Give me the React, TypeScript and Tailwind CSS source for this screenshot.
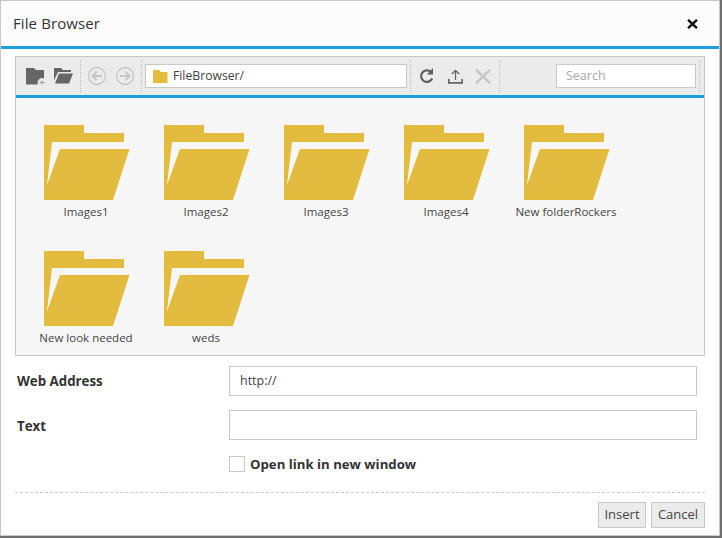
const folders = ["Images1", "Images2", "Images3", "Images4", "New folderRockers", "New look needed", "weds"];

function BigFolder() {
  return (
    <svg width="86" height="75" viewBox="0 0 86 75" className="block">
      <path d="M0 0H40V8H80V17H8L3 60L16 24H85.500L69 75H0Z" fill="#e3bc3f" />
    </svg>
  );
}

function Separator() {
  return <div className="h-[33px] w-0 border-l border-dotted border-[#bdbdbd]" />;
}

function CircleArrow({ dir }: { dir: "left" | "right" }) {
  return (
    <svg width="20" height="20" viewBox="0 0 20 20" fill="none" stroke="#c6c6c6" className="block">
      <circle cx="10" cy="10" r="8.500" strokeWidth="1.300" />
      {dir === "left" ? (
        <path d="M15 10H6M9.500 6L5.500 10L9.500 14" strokeWidth="2" />
      ) : (
        <path d="M5 10H14M10.500 6L14.500 10L10.500 14" strokeWidth="2" />
      )}
    </svg>
  );
}

export default function App() {
  return (
    <div className="h-[538px] w-[722px] overflow-hidden bg-[#6f6f6f] font-['Open_Sans','Noto_Sans',sans-serif] text-[#333]">
      <div className="h-[536px] w-[720px] border border-[#c8c8c8] bg-white">
        <div className="flex h-[45px] items-center justify-between bg-[#fcfcfc] pr-[21px] pl-[12px]">
          <span className="text-[15px] tracking-[0.1px] text-[#333]">File Browser</span>
          <svg width="11" height="10" viewBox="0 0 11 10" stroke="#111" strokeWidth="2.400" className="block">
            <path d="M1 .8L10 9.200M10 .8L1 9.200" />
          </svg>
        </div>
        <div className="h-[3px] bg-[#1b9fdc]" />

        <div className="mx-[14px] mt-[7px] h-[300px] border border-[#c8c8c8] bg-[#f7f7f7]">
          <div className="flex h-[38px] items-center bg-[#ebebeb] pl-[10px]">
            <svg width="19" height="17" viewBox="0 0 19 17" className="block">
              <path d="M0 0H8L10 2H18V10.500A4.500 4.500 0 0 0 12 16.500H0Z" fill="#666" />
              <path d="M13.500 14.500H18.500M16 12.500V16.500" stroke="#999" strokeWidth="1" />
            </svg>
            <svg width="19" height="16" viewBox="0 0 19 16" className="ml-[9px] block">
              <path d="M0 14.500V0H7L9 2H17V4H4L0 12.500Z" fill="#666" />
              <path d="M5 5.500H19L15 15.500H1Z" fill="#666" />
            </svg>
            <div className="ml-[7px]">
              <Separator />
            </div>
            <div className="ml-[6px]">
              <CircleArrow dir="left" />
            </div>
            <div className="ml-[8px]">
              <CircleArrow dir="right" />
            </div>
            <div className="ml-[6px]">
              <Separator />
            </div>
            <div className="ml-[3px] flex h-[24px] w-[262px] items-center border border-[#c8c8c8] bg-white pl-[7px]">
              <svg width="15" height="13" viewBox="0 0 15 13" className="block">
                <path d="M0 0H6L8 2H14.500V13H0Z" fill="#e3bc3f" />
              </svg>
              <span className="ml-[5px] text-[12.200px] text-[#444]">FileBrowser/</span>
            </div>
            <div className="ml-[3px]">
              <Separator />
            </div>
            <svg width="16" height="16" viewBox="0 0 16 16" fill="none" className="ml-[8px] block">
              <path d="M13.200 10.500A5.800 5.800 0 1 1 12 4" stroke="#5f5f5f" strokeWidth="2.200" />
              <path d="M14 0V6.500H7.800Z" fill="#5f5f5f" />
            </svg>
            <svg width="15" height="15" viewBox="0 0 15 15" fill="none" stroke="#666" className="ml-[13px] block">
              <path d="M7.500 11V1.500M3.800 5L7.500 1.300L11.200 5" strokeWidth="1.300" />
              <path d="M.8 10V13.800H14.200V10" strokeWidth="1.800" />
            </svg>
            <svg width="16" height="15" viewBox="0 0 16 15" stroke="#c6c6c6" strokeWidth="2.400" className="ml-[12px] block">
              <path d="M1 .8L15 14.200M15 .8L1 14.200" />
            </svg>
            <div className="ml-[8px]">
              <Separator />
            </div>
            <div className="ml-[56px] flex h-[24px] w-[140px] items-center border border-[#c8c8c8] bg-white pl-[9px] text-[12.500px] text-[#a8a8a8]">
              <span className="mt-[1px]">Search</span>
            </div>
            <div className="ml-[3px]">
              <Separator />
            </div>
          </div>
          <div className="h-[3px] bg-[#1b9fdc]" />

          <div className="flex flex-wrap pt-[27px] pl-[10px]">
            {folders.map((name) => (
              <div key={name} className="flex h-[126px] w-[120px] flex-col items-center">
                <div className="ml-[2px]">
                  <BigFolder />
                </div>
                <span className="mt-[3px] text-[11.500px] whitespace-nowrap text-[#444]">{name}</span>
              </div>
            ))}
          </div>
        </div>

        <div className="mt-[10px] flex h-[30px] items-center pr-[22px] pl-[16px]">
          <label className="mt-[1px] w-[212px] text-[13.300px] font-bold">Web Address</label>
          <div className="flex h-[30px] flex-1 items-center border border-[#c8c8c8] bg-white pl-[10px] text-[12.500px] text-[#444]">
            http://
          </div>
        </div>
        <div className="mt-[14px] flex h-[30px] items-center pr-[22px] pl-[16px]">
          <label className="mt-[3px] w-[212px] text-[13.300px] font-bold">Text</label>
          <div className="h-[30px] flex-1 border border-[#c8c8c8] bg-white" />
        </div>
        <div className="mt-[16px] flex h-[16px] items-center pl-[228px]">
          <div className="h-[16px] w-[16px] border border-[#c8c8c8] bg-white" />
          <span className="mt-[1px] ml-[5px] text-[13.200px] font-bold">Open link in new window</span>
        </div>

        <div className="mx-[14px] mt-[20px] border-t border-dashed border-[#c8c8c8]" />
        <div className="mt-[9px] flex justify-end gap-[5px] pr-[14px]">
          <button type="button" className="h-[26px] w-[48px] border border-[#c8c8c8] bg-[#ebebeb] text-[13px] text-[#444]">
            Insert
          </button>
          <button type="button" className="h-[26px] w-[54px] border border-[#c8c8c8] bg-[#ebebeb] text-[13px] text-[#444]">
            Cancel
          </button>
        </div>
      </div>
    </div>
  );
}
